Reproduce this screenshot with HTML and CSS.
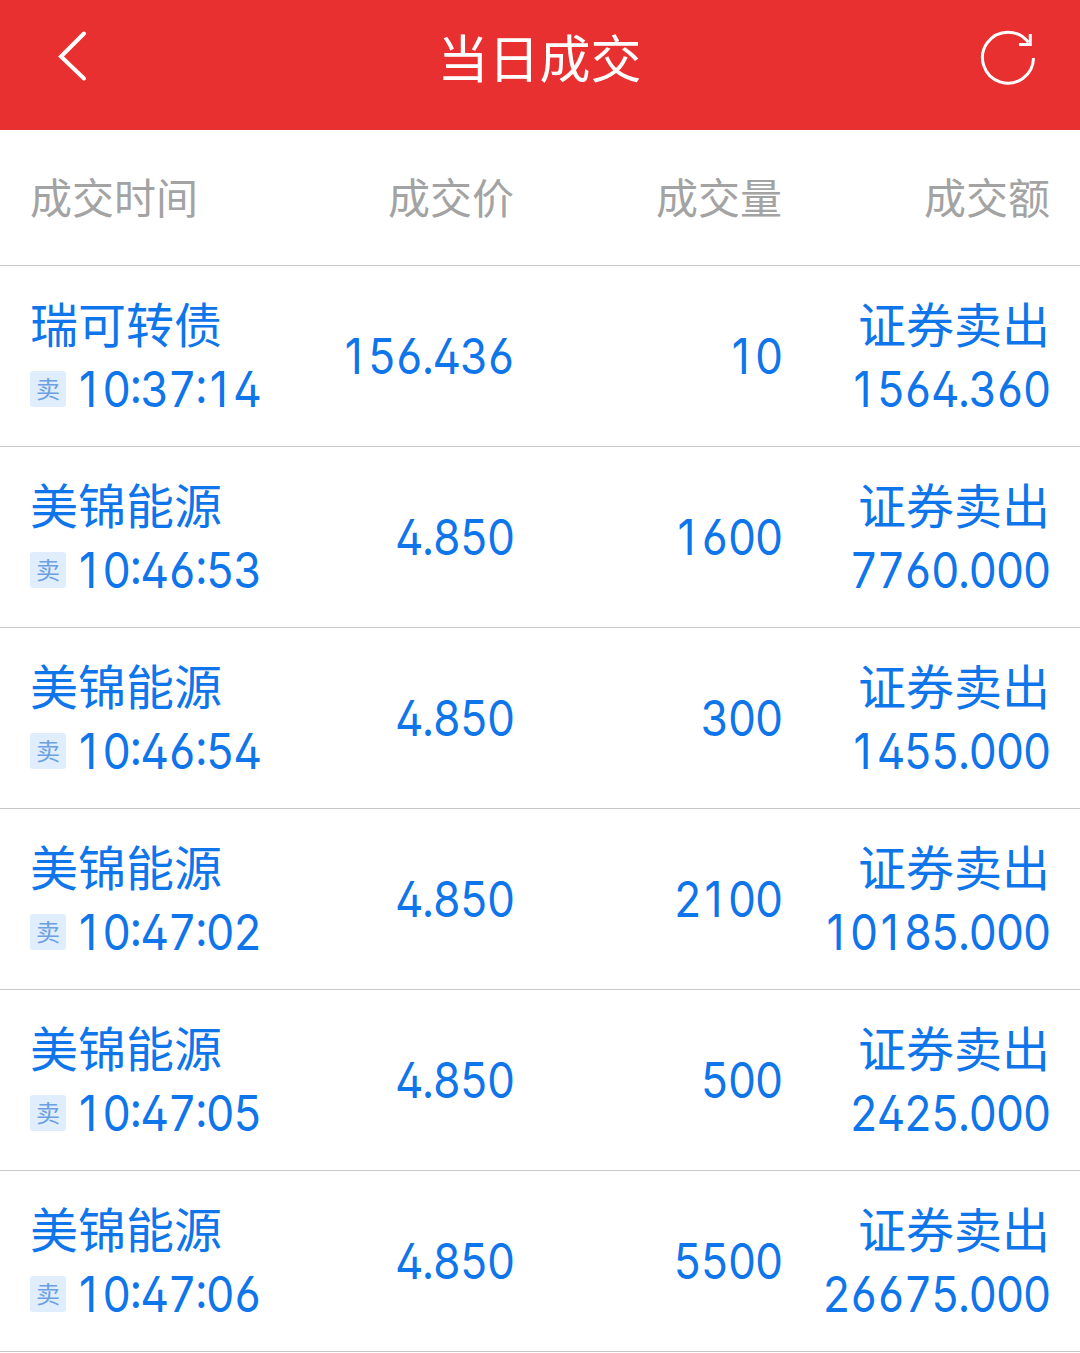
FILE: index.html
```html
<!DOCTYPE html>
<html lang="zh-CN">
<head>
    <meta charset="UTF-8">
    <meta name="viewport" content="width=device-width, initial-scale=1.0">
    <title>当日成交</title>
    <link rel="stylesheet" href="styles.css">
</head>
<body>
    <header class="topbar">
        <svg class="icon-back" viewBox="0 0 40 60" fill="none" stroke="#fff" stroke-width="4">
            <path d="M30 6.500 L7 29.500 L30 51.500" stroke-linecap="round"/>
        </svg>
        <h1>当日成交</h1>
        <svg class="icon-refresh" viewBox="0 0 60 60" fill="none" stroke="#fff" stroke-width="3">
            <path d="M53.500 31 A25.500 25.500 0 1 1 48.500 15.500"/>
            <path d="M39 17.500 H50.300 V7"/>
        </svg>
    </header>
    <div class="row head">
        <div>成交时间</div>
        <div>成交价</div>
        <div>成交量</div>
        <div>成交额</div>
    </div>
    <div class="row">
        <div><p>瑞可转债</p><p class="time"><span class="tag">卖</span><span class="num"><i>1</i>0:37:<i>1</i>4</span></p></div>
        <div class="num"><i>1</i>56.436</div>
        <div class="num"><i>1</i>0</div>
        <div><p>证券卖出</p><p class="num"><i>1</i>564.360</p></div>
    </div>
    <div class="row">
        <div><p>美锦能源</p><p class="time"><span class="tag">卖</span><span class="num"><i>1</i>0:46:53</span></p></div>
        <div class="num">4.850</div>
        <div class="num"><i>1</i>600</div>
        <div><p>证券卖出</p><p class="num">7760.000</p></div>
    </div>
    <div class="row">
        <div><p>美锦能源</p><p class="time"><span class="tag">卖</span><span class="num"><i>1</i>0:46:54</span></p></div>
        <div class="num">4.850</div>
        <div class="num">300</div>
        <div><p>证券卖出</p><p class="num"><i>1</i>455.000</p></div>
    </div>
    <div class="row">
        <div><p>美锦能源</p><p class="time"><span class="tag">卖</span><span class="num"><i>1</i>0:47:02</span></p></div>
        <div class="num">4.850</div>
        <div class="num">2<i>1</i>00</div>
        <div><p>证券卖出</p><p class="num"><i>1</i>0<i>1</i>85.000</p></div>
    </div>
    <div class="row">
        <div><p>美锦能源</p><p class="time"><span class="tag">卖</span><span class="num"><i>1</i>0:47:05</span></p></div>
        <div class="num">4.850</div>
        <div class="num">500</div>
        <div><p>证券卖出</p><p class="num">2425.000</p></div>
    </div>
    <div class="row">
        <div><p>美锦能源</p><p class="time"><span class="tag">卖</span><span class="num"><i>1</i>0:47:06</span></p></div>
        <div class="num">4.850</div>
        <div class="num">5500</div>
        <div><p>证券卖出</p><p class="num">26675.000</p></div>
    </div>
</body>
</html>
```
FILE: styles.css
```css
* {
    box-sizing: border-box;
    margin: 0;
    padding: 0;
}
body {
    font-family: "Noto Sans CJK SC", sans-serif;
    background-color: #fff;
    color: #0f75ea;
}
.topbar {
    display: flex;
    justify-content: space-between;
    align-items: center;
    height: 130px;
    padding: 0 40px 16px 54px;
    background-color: #e7302f;
    color: #fff;
}
.topbar h1 {
    margin: -2px 15px 0 0;
    font-size: 51px;
    font-weight: 400;
    line-height: 60px;
}
.icon-back {
    width: 40px;
    height: 60px;
    margin-right: 20px;
}
.icon-refresh {
    width: 60px;
    height: 60px;
}
.row {
    display: grid;
    grid-template-columns: 270px 214px 268px 268px;
    align-items: center;
    height: 181px;
    padding: 0 30px;
    border-bottom: 1px solid #c8c8c8;
    font-size: 48px;
    line-height: 65px;
    white-space: nowrap;
}
.row > div {
    text-align: right;
}
.row > div:first-child {
    text-align: left;
}
.row p:first-child {
    padding-bottom: 1px;
}
.head {
    height: 136px;
    padding-bottom: 5px;
    color: #a3a3a3;
    font-size: 42px;
}
/* narrow tabular digits */
.num {
    padding-top: 1px;
    font-family: Inter, sans-serif;
    font-size: 49px;
    letter-spacing: -1.6px;
    font-feature-settings: "tnum", "case", "cv02", "cv03", "cv04";
    transform: scaleX(0.9);
    transform-origin: right;
}
/* the plain 1, without a foot, on the width of the other digits */
.num i {
    display: inline-block;
    width: 30px;
    padding-right: 3px;
    font-style: normal;
    font-feature-settings: normal;
    text-align: center;
}
.time {
    display: flex;
    align-items: center;
}
.time .num {
    transform: scaleX(0.91);
    transform-origin: left;
}
.tag {
    width: 36px;
    height: 36px;
    margin-right: 9px;
    border-radius: 3px;
    background-color: #e0edfd;
    color: #6ba0e2;
    font-size: 24px;
    line-height: 34px;
    text-align: center;
}
```
